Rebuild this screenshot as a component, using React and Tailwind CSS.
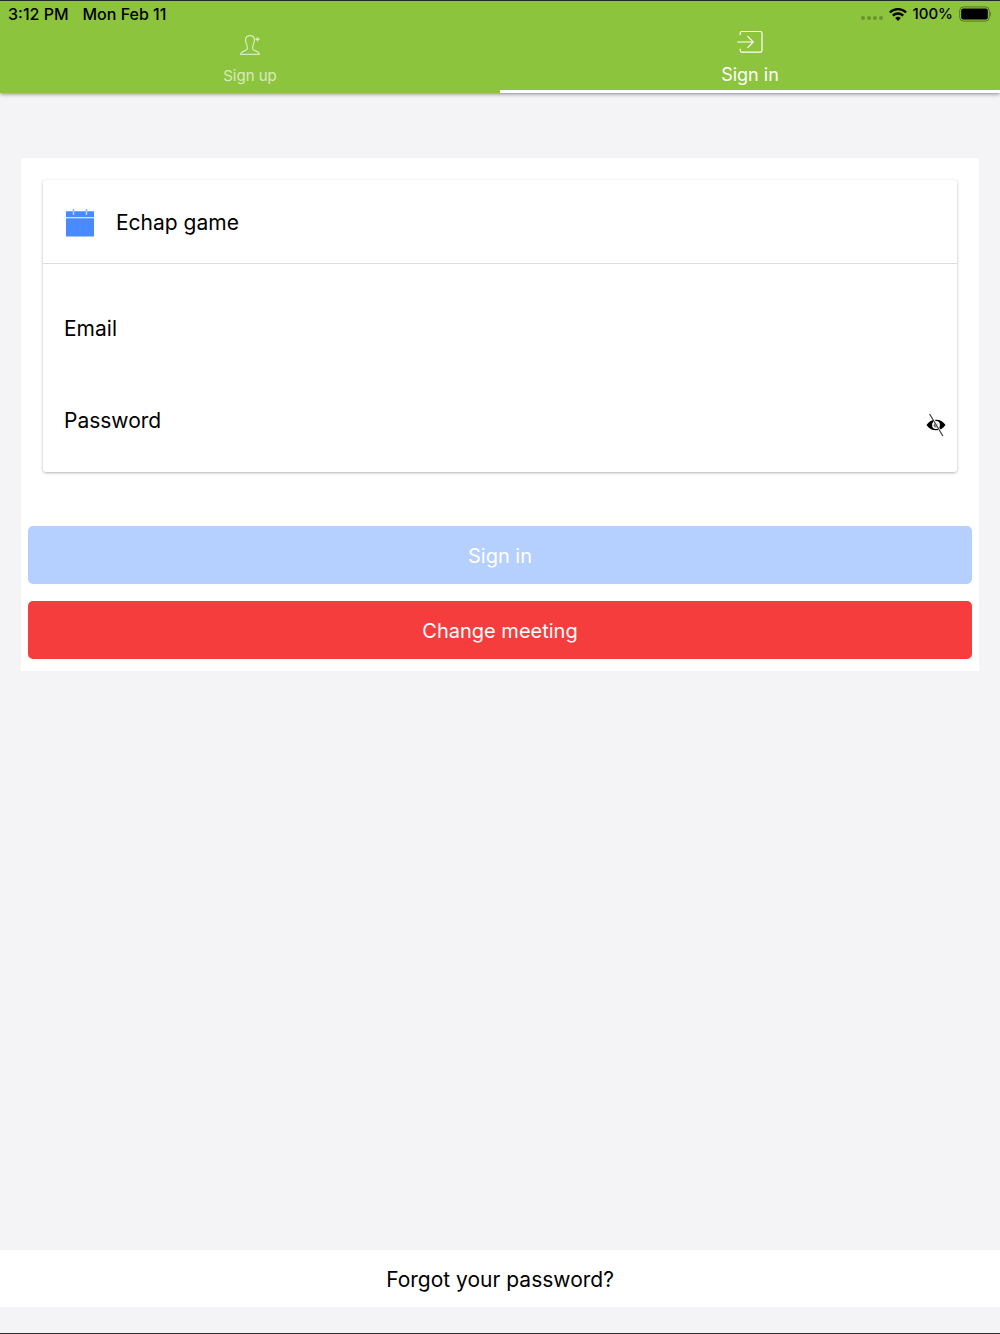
import React, { useState } from 'react';

const SignUpIcon = () => (
  <svg className="w-5 h-5" viewBox="0 0 20 20" fill="none" stroke="currentColor" strokeWidth="1.2">
    <path d="M10 .7C7.400.7 5.500 2.200 5.500 5c0 2 .7 3.200 1.200 4.600.8 2.200 1 3.800.1 5C5.500 16.200 1 15.800.7 19.300h18.600c-.3-3.500-4.800-3.100-6.100-4.700-.9-1.200-.7-2.800.1-5 .5-1.400 1.200-2.600 1.200-4.600 0-2.800-1.900-4.300-4.500-4.300z" />
    <path d="M17.500 2.200v4M15.500 4.200h4" strokeWidth="1.6" />
  </svg>
);

const SignInIcon = () => (
  <svg className="w-[26px] h-6" viewBox="0 0 26 24" fill="none" stroke="currentColor" strokeWidth="1.2">
    <path d="M3.200 5V3.200c0-1 .6-1.700 1.700-1.700h18.400c1.100 0 1.700.7 1.700 1.700v17.300c0 1-.6 1.700-1.700 1.700H4.900c-1.100 0-1.700-.7-1.700-1.700v-1.700M.3 12H16M10.500 6.200l5.700 5.800-5.700 5.800" />
  </svg>
);

const WifiIcon = () => (
  <svg className="w-[18px] h-[13px]" viewBox="0 0 18 13" fill="none" stroke="currentColor">
    <path d="M.9 4.500a11.600 11.600 0 0 1 16.200 0M3.800 7.600a7.500 7.500 0 0 1 10.400 0" strokeWidth="2.3" />
    <path d="M9 12.900 6.200 10.100a4 4 0 0 1 5.600 0z" fill="currentColor" stroke="none" />
  </svg>
);

const BatteryIcon = () => (
  <svg className="w-8 h-4" viewBox="0 0 32 16">
    <rect x=".7" y=".9" width="29.6" height="14.2" rx="3.8" fill="none" stroke="black" strokeOpacity=".4" />
    <rect x="2.2" y="2.5" width="26.6" height="11" rx="2" />
    <path d="M31.100 5.500c1.200.6 1.200 4.400 0 5z" fillOpacity=".4" />
  </svg>
);

const CalendarIcon = () => (
  <svg className="w-7 h-7" viewBox="0 0 28 28">
    <path d="M0 2.200h28v6H0zM0 9.200h28V27.500H0z" fill="#488aff" />
    <path d="M7.500 0v6M20.500 0v6" stroke="#c3d9ff" strokeWidth="1.4" />
    <path d="M7.500 0v2M20.500 0v2" stroke="#85b1ff" strokeWidth="1.4" />
  </svg>
);

const EyeOffIcon = () => (
  <svg className="w-5 h-6" viewBox="0 0 20 24">
    <path d="M.5 12C2.800 8.600 6 6.700 10 6.700s7.200 1.900 9.500 5.300c-2.300 3.400-5.500 5.300-9.500 5.300S2.800 15.400.5 12z" />
    <circle cx="10" cy="12" r="3.9" fill="white" />
    <circle cx="9.800" cy="12.200" r="2.2" fill="#777" />
    <path d="m4.600 1.200 12.400 22" stroke="white" strokeWidth="2.2" />
    <path d="m3.600 1 13.300 22" stroke="#444" strokeWidth="1.3" />
  </svg>
);

const StatusBar = () => (
  <div className="flex items-center justify-between h-[26px] pl-2 pr-[9px] font-medium text-black">
    <div className="flex gap-[14px] text-[16px]">
      <span>3:12 PM</span>
      <span>Mon Feb 11</span>
    </div>
    <div className="flex items-center gap-[6px] text-[15px]">
      <div className="flex gap-[2px] pt-2">
        {[0, 1, 2, 3].map((dot) => (
          <span key={dot} className="w-1 h-1 rounded-full bg-black/25"></span>
        ))}
      </div>
      <WifiIcon />
      <span>100%</span>
      <BatteryIcon />
    </div>
  </div>
);

const App = () => {
  const [email, setEmail] = useState('');
  const [password, setPassword] = useState('');
  const [showPassword, setShowPassword] = useState(false);

  return (
    <div className="min-h-screen flex flex-col bg-[#f4f4f7] border-y border-[#2b2b2b] font-['Inter',sans-serif] text-black">
      <header className="bg-[#8cc43d] shadow-[0_1px_4px_rgba(0,0,0,0.45)]">
        <StatusBar />
        <nav className="grid grid-cols-2 h-[66px] text-white">
          <a href="#signup" className="flex flex-col items-center gap-[9px] pt-2 text-[15px] leading-6 text-white/65">
            <SignUpIcon />
            Sign up
          </a>
          <a href="#signin" className="flex flex-col items-center gap-[9px] pt-[3px] text-[18px] leading-6 border-b-3 border-white">
            <SignInIcon />
            Sign in
          </a>
        </nav>
      </header>

      <main className="flex-1">
        <form className="mx-[21px] mt-[65px] px-[7px] pt-[22px] pb-3 bg-white" onSubmit={(e) => e.preventDefault()}>
          <div className="mx-[15px] rounded-[3px] shadow-[0_1px_3px_rgba(0,0,0,0.3)] text-[21px] leading-8">
            <div className="flex items-center gap-[22px] h-[84px] pl-[23px] pt-[2px] border-b border-[#dedede]">
              <CalendarIcon />
              <h1>Echap game</h1>
            </div>
            <div className="flex items-center gap-4 mt-[33px] h-16 px-[21px]">
              <label htmlFor="email">Email</label>
              <input
                id="email"
                type="email"
                value={email}
                onChange={(e) => setEmail(e.target.value)}
                className="flex-1 outline-none"
              />
            </div>
            <div className="flex items-center gap-4 mt-7 h-16 pl-[21px] pr-[11px]">
              <label htmlFor="password">Password</label>
              <input
                id="password"
                type={showPassword ? 'text' : 'password'}
                value={password}
                onChange={(e) => setPassword(e.target.value)}
                className="flex-1 outline-none"
              />
              <button type="button" aria-label="Show password" className="pt-2" onClick={() => setShowPassword(!showPassword)}>
                <EyeOffIcon />
              </button>
            </div>
            <div className="h-[19px]"></div>
          </div>

          <div className="flex flex-col gap-[17px] mt-[54px] text-[20px] text-white">
            <button type="submit" className="h-[58px] pt-[2px] rounded-[5px] bg-[#b5d0ff]">
              Sign in
            </button>
            <button type="button" className="h-[58px] pt-[2px] rounded-[5px] bg-[#f63d3d]">
              Change meeting
            </button>
          </div>
        </form>
      </main>

      <footer className="pb-[26px]">
        <button type="button" className="w-full h-[57px] pt-[2px] bg-white text-[21px]">
          Forgot your password?
        </button>
      </footer>
    </div>
  );
};

export default App;
